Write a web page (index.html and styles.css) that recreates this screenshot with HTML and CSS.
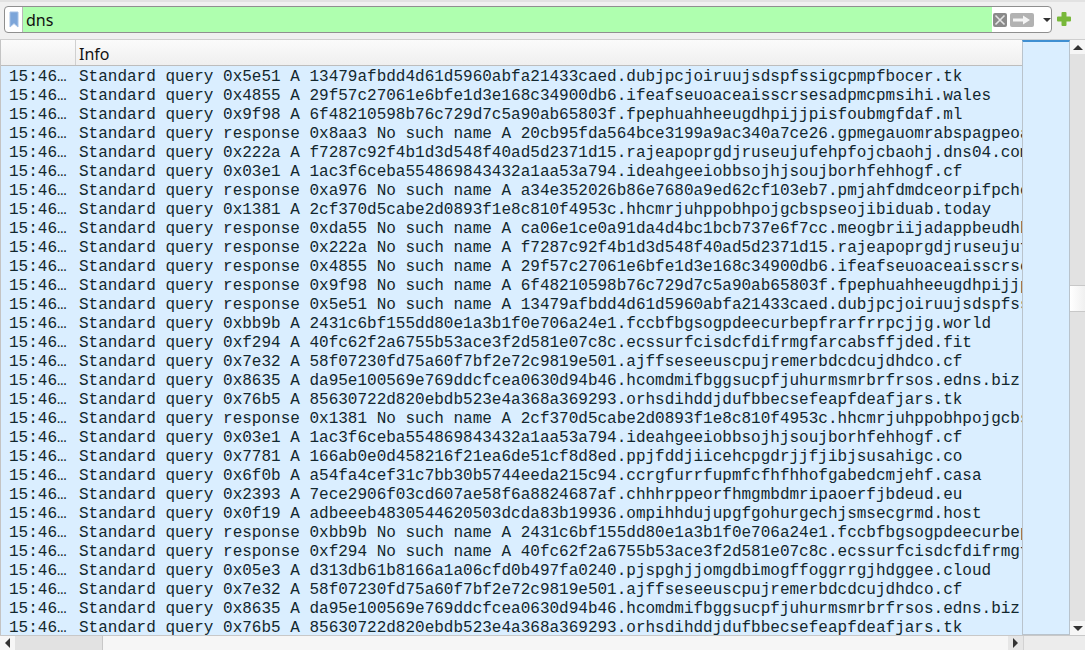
FILE: index.html
```html
<!DOCTYPE html>
<html lang="en">
<head>
<meta charset="utf-8">
<title>dns</title>
<link rel="stylesheet" href="styles.css">
</head>
<body>
<div class="app">
  <div class="filterbar">
    <div class="filterbox">
      <span class="bookmark"><svg width="10" height="17" viewBox="0 0 10 17"><path d="M1 1h8v15L5 12.5 1 16z" fill="#7ca5d9" stroke="#a4c0e4" stroke-width="1"/></svg></span>
      <span class="filtertext">dns</span>
      <span class="filtertools">
        <svg class="tool" width="14" height="14" viewBox="0 0 14 14"><rect width="14" height="14" rx="2" fill="#8a8a8a"/><path d="M2.500 2.500l9 9M11.500 2.500l-9 9" stroke="#e4e4e4" stroke-width="1.600"/></svg>
        <svg class="tool" width="24" height="14" viewBox="0 0 24 14"><rect width="24" height="14" rx="2" fill="#b2b2b2"/><path d="M3 5.500h10V2.500l7 4.500-7 4.500V8.500H3z" fill="#f4f4f4"/></svg>
        <span class="caret"></span>
      </span>
    </div>
    <svg class="plus" width="14" height="14" viewBox="0 0 14 14"><path d="M4.500 1a1 1 0 0 1 1-1h3a1 1 0 0 1 1 1v3.500H13a1 1 0 0 1 1 1v3a1 1 0 0 1-1 1H9.500V13a1 1 0 0 1-1 1h-3a1 1 0 0 1-1-1V9.500H1a1 1 0 0 1-1-1v-3a1 1 0 0 1 1-1h3.500z" fill="#78b83a"/></svg>
  </div>
  <div class="view">
    <div class="table">
      <div class="thead"><div class="th-no"></div><div class="th-info">Info</div></div>
      <div class="tbody">
        <div class="row"><span class="t">15:46…</span><span class="i">Standard query 0x5e51 A 13479afbdd4d61d5960abfa21433caed.dubjpcjoiruujsdspfssigcpmpfbocer.tk</span></div>
        <div class="row"><span class="t">15:46…</span><span class="i">Standard query 0x4855 A 29f57c27061e6bfe1d3e168c34900db6.ifeafseuoaceaisscrsesadpmcpmsihi.wales</span></div>
        <div class="row"><span class="t">15:46…</span><span class="i">Standard query 0x9f98 A 6f48210598b76c729d7c5a90ab65803f.fpephuahheeugdhpijjpisfoubmgfdaf.ml</span></div>
        <div class="row"><span class="t">15:46…</span><span class="i">Standard query response 0x8aa3 No such name A 20cb95fda564bce3199a9ac340a7ce26.gpmegauomrabspagpeoa</span></div>
        <div class="row"><span class="t">15:46…</span><span class="i">Standard query 0x222a A f7287c92f4b1d3d548f40ad5d2371d15.rajeapoprgdjruseujufehpfojcbaohj.dns04.com</span></div>
        <div class="row"><span class="t">15:46…</span><span class="i">Standard query 0x03e1 A 1ac3f6ceba554869843432a1aa53a794.ideahgeeiobbsojhjsoujborhfehhogf.cf</span></div>
        <div class="row"><span class="t">15:46…</span><span class="i">Standard query response 0xa976 No such name A a34e352026b86e7680a9ed62cf103eb7.pmjahfdmdceorpifpche</span></div>
        <div class="row"><span class="t">15:46…</span><span class="i">Standard query 0x1381 A 2cf370d5cabe2d0893f1e8c810f4953c.hhcmrjuhppobhpojgcbspseojibiduab.today</span></div>
        <div class="row"><span class="t">15:46…</span><span class="i">Standard query response 0xda55 No such name A ca06e1ce0a91da4d4bc1bcb737e6f7cc.meogbriijadappbeudhb</span></div>
        <div class="row"><span class="t">15:46…</span><span class="i">Standard query response 0x222a No such name A f7287c92f4b1d3d548f40ad5d2371d15.rajeapoprgdjruseujuf</span></div>
        <div class="row"><span class="t">15:46…</span><span class="i">Standard query response 0x4855 No such name A 29f57c27061e6bfe1d3e168c34900db6.ifeafseuoaceaisscrse</span></div>
        <div class="row"><span class="t">15:46…</span><span class="i">Standard query response 0x9f98 No such name A 6f48210598b76c729d7c5a90ab65803f.fpephuahheeugdhpijjp</span></div>
        <div class="row"><span class="t">15:46…</span><span class="i">Standard query response 0x5e51 No such name A 13479afbdd4d61d5960abfa21433caed.dubjpcjoiruujsdspfss</span></div>
        <div class="row"><span class="t">15:46…</span><span class="i">Standard query 0xbb9b A 2431c6bf155dd80e1a3b1f0e706a24e1.fccbfbgsogpdeecurbepfrarfrrpcjjg.world</span></div>
        <div class="row"><span class="t">15:46…</span><span class="i">Standard query 0xf294 A 40fc62f2a6755b53ace3f2d581e07c8c.ecssurfcisdcfdifrmgfarcabsffjded.fit</span></div>
        <div class="row"><span class="t">15:46…</span><span class="i">Standard query 0x7e32 A 58f07230fd75a60f7bf2e72c9819e501.ajffseseeuscpujremerbdcdcujdhdco.cf</span></div>
        <div class="row"><span class="t">15:46…</span><span class="i">Standard query 0x8635 A da95e100569e769ddcfcea0630d94b46.hcomdmifbggsucpfjuhurmsmrbrfrsos.edns.biz</span></div>
        <div class="row"><span class="t">15:46…</span><span class="i">Standard query 0x76b5 A 85630722d820ebdb523e4a368a369293.orhsdihddjdufbbecsefeapfdeafjars.tk</span></div>
        <div class="row"><span class="t">15:46…</span><span class="i">Standard query response 0x1381 No such name A 2cf370d5cabe2d0893f1e8c810f4953c.hhcmrjuhppobhpojgcbs</span></div>
        <div class="row"><span class="t">15:46…</span><span class="i">Standard query 0x03e1 A 1ac3f6ceba554869843432a1aa53a794.ideahgeeiobbsojhjsoujborhfehhogf.cf</span></div>
        <div class="row"><span class="t">15:46…</span><span class="i">Standard query 0x7781 A 166ab0e0d458216f21ea6de51cf8d8ed.ppjfddjiicehcpgdrjjfjibjsusahigc.co</span></div>
        <div class="row"><span class="t">15:46…</span><span class="i">Standard query 0x6f0b A a54fa4cef31c7bb30b5744eeda215c94.ccrgfurrfupmfcfhfhhofgabedcmjehf.casa</span></div>
        <div class="row"><span class="t">15:46…</span><span class="i">Standard query 0x2393 A 7ece2906f03cd607ae58f6a8824687af.chhhrppeorfhmgmbdmripaoerfjbdeud.eu</span></div>
        <div class="row"><span class="t">15:46…</span><span class="i">Standard query 0x0f19 A adbeeeb4830544620503dcda83b19936.ompihhdujupgfgohurgechjsmsecgrmd.host</span></div>
        <div class="row"><span class="t">15:46…</span><span class="i">Standard query response 0xbb9b No such name A 2431c6bf155dd80e1a3b1f0e706a24e1.fccbfbgsogpdeecurbep</span></div>
        <div class="row"><span class="t">15:46…</span><span class="i">Standard query response 0xf294 No such name A 40fc62f2a6755b53ace3f2d581e07c8c.ecssurfcisdcfdifrmgf</span></div>
        <div class="row"><span class="t">15:46…</span><span class="i">Standard query 0x05e3 A d313db61b8166a1a06cfd0b497fa0240.pjspghjjomgdbimogffoggrrgjhdggee.cloud</span></div>
        <div class="row"><span class="t">15:46…</span><span class="i">Standard query 0x7e32 A 58f07230fd75a60f7bf2e72c9819e501.ajffseseeuscpujremerbdcdcujdhdco.cf</span></div>
        <div class="row"><span class="t">15:46…</span><span class="i">Standard query 0x8635 A da95e100569e769ddcfcea0630d94b46.hcomdmifbggsucpfjuhurmsmrbrfrsos.edns.biz</span></div>
        <div class="row"><span class="t">15:46…</span><span class="i">Standard query 0x76b5 A 85630722d820ebdb523e4a368a369293.orhsdihddjdufbbecsefeapfdeafjars.tk</span></div>
      </div>
    </div>
    <div class="minimap"></div>
    <div class="vscroll">
      <div class="vbtn"><span class="tri-up"></span></div>
      <div class="vtrack-a"></div>
      <div class="vthumb"></div>
      <div class="vtrack-b"></div>
      <div class="vbtn"><span class="tri-down"></span></div>
    </div>
  </div>
  <div class="hscroll">
    <div class="hbtn light"><span class="tri-left"></span></div>
    <div class="htrack"></div>
    <div class="hthumb"></div>
    <div class="hbtn"><span class="tri-right"></span></div>
    <div class="hrest"></div>
  </div>
</div>
</body>
</html>
```
FILE: styles.css
```css
* { box-sizing: border-box; }
html, body { margin: 0; padding: 0; }
body { width: 1085px; height: 650px; overflow: hidden; background: #efefef; font-family: "Noto Sans", sans-serif; color: #111; }
.app { display: flex; flex-direction: column; height: 650px; }
.filterbar { height: 39px; flex: none; display: flex; align-items: flex-start; padding: 4px 0 0 4px; gap: 5px; background: #f0f0f0; border-top: 2px solid #e2e2e2; }
.filterbox { width: 1048px; height: 27px; display: flex; align-items: stretch; background: #fff; border: 1px solid #8f8f8f; border-radius: 4px; overflow: hidden; }
.bookmark { width: 18px; flex: none; display: flex; align-items: center; justify-content: center; border-right: 1px solid #b9b9b9; padding-bottom: 1px; }
.filtertext { width: 969px; flex: none; background: #afffaf; font-size: 16px; line-height: 27px; padding-left: 3px; color: #111; }
.filtertools { flex: 1; display: flex; align-items: center; padding-left: 1px; gap: 3px; }
.tool { flex: none; }
.caret { width: 0; height: 0; margin-left: 6px; border-left: 4px solid transparent; border-right: 4px solid transparent; border-top: 4px solid #333; }
.plus { flex: none; margin-top: 6px; }
.view { flex: 1; min-height: 0; display: flex; border-top: 1px solid #cfcfcf; }
.table { width: 1022px; flex: none; display: flex; flex-direction: column; overflow: hidden; border-left: 1px solid #c4c4c4; }
.thead { height: 26px; flex: none; display: flex; background: linear-gradient(#fbfbfb, #efefef); border-bottom: 1px solid #bdbdbd; font-size: 16px; line-height: 28px; }
.th-no { width: 75px; border-right: 1px solid #d0d0d0; }
.th-info { padding-left: 3px; }
.tbody { flex: 1; min-height: 0; overflow: hidden; background: #daeeff; padding-top: 2px; }
.row { height: 19px; display: flex; white-space: nowrap; font-family: "Liberation Mono", monospace; font-size: 16px; line-height: 19px; color: #12272e; }
.t { width: 78px; flex: none; padding-left: 8px; }
.minimap { width: 48px; flex: none; background: #daeeff; border-top: 2px solid #3f8fd2; border-left: 1px solid #b9c3cc; border-right: 1px solid #b9c3cc; border-bottom: 1px solid #b9c3cc; }
.vscroll { width: 15px; flex: none; display: flex; flex-direction: column; background: #e2e2e2; }
.vbtn { height: 14px; flex: none; background: #f6f6f6; display: flex; align-items: center; justify-content: center; }
.vtrack-a { height: 231px; flex: none; }
.vthumb { height: 27px; flex: none; background: linear-gradient(90deg, #fff, #f0f0f0); border-top: 1px solid #c8c8c8; border-bottom: 1px solid #c8c8c8; }
.vtrack-b { flex: 1; }
.tri-up { width: 0; height: 0; border-left: 5px solid transparent; border-right: 5px solid transparent; border-bottom: 5px solid #333; }
.tri-down { width: 0; height: 0; border-left: 5px solid transparent; border-right: 5px solid transparent; border-top: 5px solid #333; }
.hscroll { height: 15px; flex: none; display: flex; background: #e6e6e6; border-top: 1px solid #c8c8c8; }
.hbtn { width: 15px; flex: none; display: flex; align-items: center; justify-content: center; background: #e6e6e6; }
.hbtn.light { background: #f6f6f6; }
.htrack { width: 88px; flex: none; background: #e2e2e2; border-right: 1px solid #c8c8c8; }
.hthumb { flex: 1; background: #f6f6f6; }
.hrest { width: 62px; flex: none; background: #ececec; border-left: 1px solid #d2d2d2; }
.tri-left { width: 0; height: 0; border-top: 5px solid transparent; border-bottom: 5px solid transparent; border-right: 5px solid #333; }
.tri-right { width: 0; height: 0; border-top: 5px solid transparent; border-bottom: 5px solid transparent; border-left: 5px solid #333; }
```
